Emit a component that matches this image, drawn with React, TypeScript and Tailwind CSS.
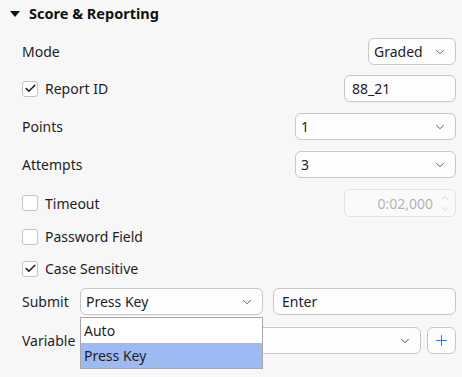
import { ChevronDown, ChevronUp, Plus, Check } from "lucide-react";

function Chevron() {
  return <ChevronDown className="w-[14px] h-[14px] text-[#444]" strokeWidth={1.5} />;
}

function Select({ value, className }: { value: string; className: string }) {
  return (
    <div
      className={`h-[27px] flex items-center justify-between pl-[5px] pr-[8px] bg-[#fdfdfd] border border-[#c8c8c8] rounded-[6px] text-[#1e1e1e] ${className}`}
    >
      <span>{value}</span>
      <Chevron />
    </div>
  );
}

function Box({ checked }: { checked?: boolean }) {
  return (
    <div className="w-[16px] h-[16px] rounded-[3px] border border-[#c4c4c4] bg-white flex items-center justify-center shrink-0">
      {checked && <Check className="w-[13px] h-[13px] text-[#111]" strokeWidth={2.6} />}
    </div>
  );
}

function CheckRow({ label, checked }: { label: string; checked?: boolean }) {
  return (
    <div className="flex items-center gap-[7px]">
      <Box checked={checked} />
      <span>{label}</span>
    </div>
  );
}

export default function App() {
  return (
    <div
      className="relative w-[462px] h-[377px] bg-[#f7f7f7] text-[14px] text-[#1e1e1e] overflow-hidden"
      style={{ fontFamily: '"Noto Sans", "Open Sans", sans-serif' }}
    >
      <div className="h-[28px] flex items-center pl-[10px] gap-[9px]">
        <svg width="10" height="6" viewBox="0 0 10 6">
          <polygon points="0,0 10,0 5,6" fill="#111" />
        </svg>
        <span className="font-bold text-[14.5px] text-[#111]">Score &amp; Reporting</span>
      </div>

      <div className="pl-[22px] pr-[6px]">
        <div className="mt-[10px] h-[27px] flex items-center justify-between">
          <span>Mode</span>
          <Select value="Graded" className="w-[88px]" />
        </div>

        <div className="mt-[10px] h-[27px] flex items-center justify-between">
          <CheckRow label="Report ID" checked />
          <div className="w-[112px] h-[27px] flex items-center pl-[7px] bg-[#fdfdfd] border border-[#c8c8c8] rounded-[6px]">
            88_21
          </div>
        </div>

        <div className="mt-[11px] h-[27px] flex items-center justify-between">
          <span>Points</span>
          <Select value="1" className="w-[161px]" />
        </div>

        <div className="mt-[11px] h-[27px] flex items-center justify-between">
          <span>Attempts</span>
          <Select value="3" className="w-[161px]" />
        </div>

        <div className="mt-[11px] h-[28px] flex items-center justify-between">
          <CheckRow label="Timeout" />
          <div className="w-[112px] h-[28px] flex items-center justify-end pr-[4px] gap-[6px] bg-[#fafafa] border border-[#e2e2e2] rounded-[6px] text-[#b4b4b4]">
            <span>0:02,000</span>
            <div className="flex flex-col items-center text-[#c2c2c2] -space-y-[1px]">
              <ChevronUp className="w-[12px] h-[12px]" strokeWidth={1.3} />
              <ChevronDown className="w-[12px] h-[12px]" strokeWidth={1.3} />
            </div>
          </div>
        </div>

        <div className="mt-[6px] h-[27px] flex items-center">
          <CheckRow label="Password Field" />
        </div>

        <div className="mt-[5px] h-[27px] flex items-center">
          <CheckRow label="Case Sensitive" checked />
        </div>

        <div className="mt-[6px] h-[27px] flex items-center">
          <span className="w-[58px]">Submit</span>
          <Select value="Press Key" className="w-[183px]" />
          <div className="ml-[10px] flex-1 h-[27px] flex items-center pl-[8px] bg-[#fdfdfd] border border-[#c8c8c8] rounded-[6px]">
            Enter
          </div>
        </div>

        <div className="mt-[12px] h-[27px] flex items-center">
          <span className="w-[58px]">Variable</span>
          <Select value="" className="flex-1" />
          <div className="ml-[6px] w-[29px] h-[27px] flex items-center justify-center bg-[#fdfdfd] border border-[#c8c8c8] rounded-[6px]">
            <Plus className="w-[17px] h-[17px] text-[#2a72d8]" strokeWidth={1.4} />
          </div>
        </div>
      </div>

      <div className="absolute left-[80px] top-[317px] w-[183px] h-[52px] bg-white border border-[#a8a8a8]">
        <div className="h-[25px] flex items-center pl-[3px]">Auto</div>
        <div className="h-[25px] flex items-center pl-[3px] bg-[#9dbaf2]">Press Key</div>
      </div>
    </div>
  );
}
